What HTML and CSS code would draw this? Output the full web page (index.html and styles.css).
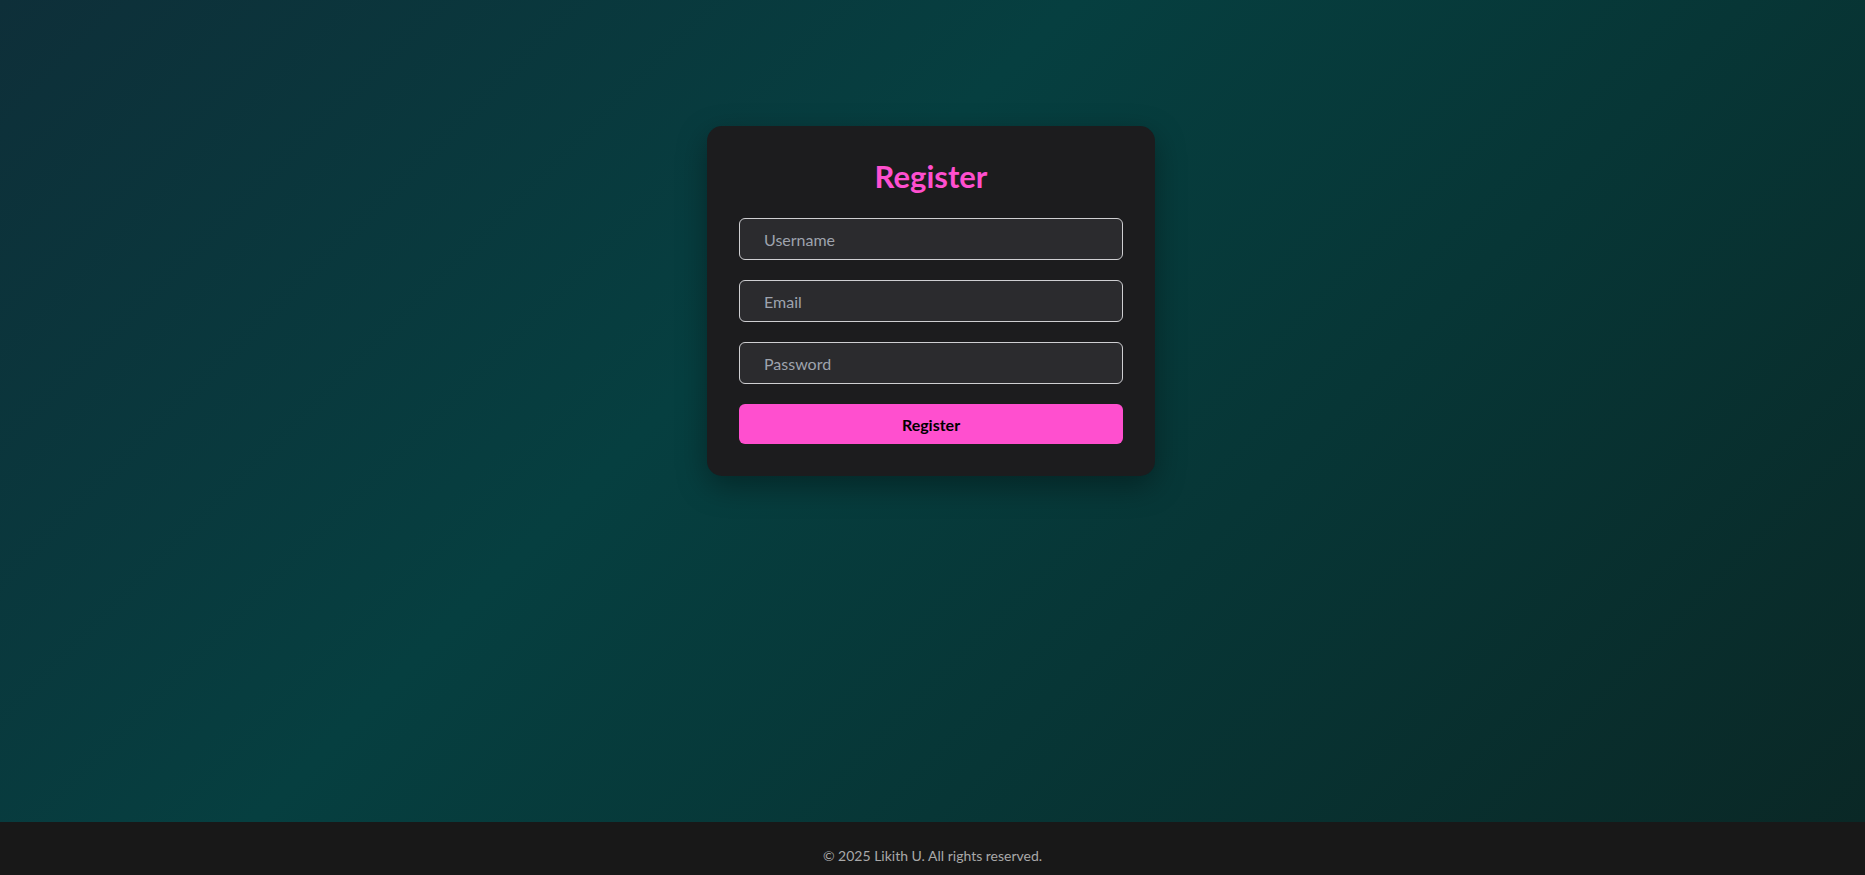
FILE: index.html
```html
<!DOCTYPE html>
<html lang="en">
<head>
<meta charset="utf-8">
<title>Register</title>
<link rel="stylesheet" href="styles.css">
</head>
<body>
<main class="page">
  <form class="card" onsubmit="return false;">
    <h2 class="title">Register</h2>
    <input class="field" type="text" placeholder="Username">
    <input class="field" type="email" placeholder="Email">
    <input class="field" type="password" placeholder="Password">
    <button class="btn" type="submit">Register</button>
  </form>
</main>
<footer class="footer">© 2025 Likith U. All rights reserved.</footer>
</body>
</html>
```
FILE: styles.css
```css
* { box-sizing: border-box; }
html, body { margin: 0; padding: 0; height: 100%; }
body {
  font-family: Lato, "Noto Sans", sans-serif;
  display: flex;
  flex-direction: column;
  overflow: hidden;
  background: #181818;
}
.page {
  height: 822px;
  flex: none;
  display: flex;
  justify-content: center;
  align-items: flex-start;
  padding: 126px 3px 0 0;
  background: linear-gradient(135deg, #0e2f39 0%, #063f40 40%, #073636 65%, #0a2826 100%);
}
.card {
  width: 448px;
  padding: 32px;
  background: #1c1c1e;
  border-radius: 15px;
  box-shadow: 0 10px 30px rgba(0, 0, 0, 0.35);
  display: flex;
  flex-direction: column;
  gap: 20px;
}
.title {
  margin: 0 0 3px;
  font-size: 31px;
  line-height: 37px;
  font-weight: 700;
  color: #ff4fcf;
  text-align: center;
}
.field {
  height: 42px;
  padding: 0 24px;
  font-family: inherit;
  font-size: 16px;
  color: #e8e8ea;
  background: #2b2b2e;
  border: 1px solid #cfcfd2;
  border-radius: 6px;
  outline: none;
}
.field::placeholder { color: #9ea3ad; }
.btn {
  height: 40px;
  border: none;
  border-radius: 6px;
  background: #ff4fcf;
  color: #000;
  font-family: inherit;
  font-size: 16px;
  font-weight: 700;
  cursor: pointer;
}
.footer {
  flex: 1;
  padding-top: 24px;
  text-align: center;
  font-size: 14px;
  line-height: 20px;
  color: #a9a9a9;
  background: #181818;
}
```
